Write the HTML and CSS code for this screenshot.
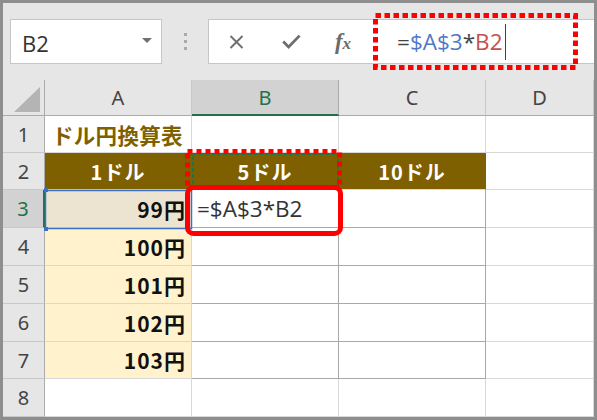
FILE: index.html
```html
<!DOCTYPE html>
<html lang="ja">
<head>
<meta charset="utf-8">
<title>ドル円換算表</title>
<link rel="stylesheet" href="styles.css">
</head>
<body>
<div class="frame">
  <div class="toolbar">
    <div class="namebox"><span class="nb-text">B2</span><span class="nb-caret"></span></div>
    <div class="sep"><i></i><i></i><i></i></div>
    <div class="fbar">
      <span class="ico ico-x"><svg width="15" height="14" viewBox="0 0 15 14"><path d="M1.5 1 L13.5 13 M13.5 1 L1.5 13" stroke="#6e6e6e" stroke-width="1.9" fill="none"/></svg></span>
      <span class="ico ico-check"><svg width="19" height="15" viewBox="0 0 19 15"><path d="M1.2 7.6 L6.6 13 L17.6 1.6" stroke="#6e6e6e" stroke-width="2.8" fill="none"/></svg></span>
      <span class="ico ico-fx">f<i>x</i></span>
      <span class="formula"><span class="op">=</span><span class="ref-a">$A$3</span><span class="op">*</span><span class="ref-b">B2</span><span class="cursor"></span></span>
    </div>
  </div>
  <div class="sheet">
    <div class="corner"><span class="tri"></span></div>
    <div class="ch">A</div>
    <div class="ch ch-sel">B</div>
    <div class="ch">C</div>
    <div class="ch">D</div>

    <div class="rh">1</div>
    <div class="c title">ドル円換算表</div>
    <div class="c"></div>
    <div class="c"></div>
    <div class="c"></div>

    <div class="rh">2</div>
    <div class="c hd">1ドル</div>
    <div class="c hd">5ドル</div>
    <div class="c hd">10ドル</div>
    <div class="c"></div>

    <div class="rh rh-sel">3</div>
    <div class="c val val-ref">99円</div>
    <div class="c edit box">=$A$3*B2</div>
    <div class="c box"></div>
    <div class="c"></div>

    <div class="rh">4</div>
    <div class="c val">100円</div>
    <div class="c box"></div>
    <div class="c box"></div>
    <div class="c"></div>

    <div class="rh">5</div>
    <div class="c val">101円</div>
    <div class="c box"></div>
    <div class="c box"></div>
    <div class="c"></div>

    <div class="rh">6</div>
    <div class="c val">102円</div>
    <div class="c box"></div>
    <div class="c box"></div>
    <div class="c"></div>

    <div class="rh">7</div>
    <div class="c val">103円</div>
    <div class="c box"></div>
    <div class="c box"></div>
    <div class="c"></div>

    <div class="rh">8</div>
    <div class="c"></div>
    <div class="c"></div>
    <div class="c"></div>
    <div class="c"></div>
  </div>
  <svg class="annot" width="597" height="420" viewBox="0 0 597 420">
    <rect x="45.5" y="190.5" width="146" height="38" fill="none" stroke="#3c6fc8" stroke-width="1.5"/>
    <rect x="44" y="188" width="4" height="4" fill="#3c6fc8"/>
    <rect x="44" y="227" width="4" height="4" fill="#3c6fc8"/>
    <rect x="193" y="154" width="145" height="35" fill="none" stroke="#217346" stroke-width="2" stroke-dasharray="4 2"/>
    <rect x="187.5" y="151.5" width="152" height="36" fill="none" stroke="#ff0000" stroke-width="5" stroke-dasharray="5 4"/>
    <rect x="187.5" y="187.5" width="153" height="46" rx="6" fill="none" stroke="#ff0000" stroke-width="5"/>
    <rect x="375.5" y="15.5" width="200" height="52" fill="none" stroke="#ff0000" stroke-width="5" stroke-dasharray="5.5 3.5"/>
  </svg>
</div>
</body>
</html>
```
FILE: styles.css
```css
html, body {
  margin: 0;
  padding: 0;
  background: #ffffff;
}

.frame {
  position: relative;
  width: 597px;
  height: 420px;
  box-sizing: border-box;
  border: 3px solid #8e8e8e;
  background: #e6e6e6;
  overflow: hidden;
  font-family: "Noto Sans", "Open Sans", "Liberation Sans", sans-serif;
}

/* ---------- toolbar ---------- */
.toolbar {
  height: 77px;
  box-sizing: border-box;
  padding-top: 16px;
  padding-left: 7px;
  display: flex;
  align-items: flex-start;
}

.namebox {
  width: 152px;
  height: 45px;
  box-sizing: border-box;
  border: 1px solid #c6c6c6;
  background: #ffffff;
  display: flex;
  align-items: center;
  justify-content: space-between;
  padding: 0 9px 0 11px;
}

.nb-text {
  font-family: "Open Sans", "Noto Sans", sans-serif;
  font-size: 22px;
  color: #333333;
  line-height: 1;
  padding-top: 2px;
}

.nb-caret {
  width: 0;
  height: 0;
  border-left: 5px solid transparent;
  border-right: 5px solid transparent;
  border-top: 5px solid #707070;
  margin-bottom: 2px;
}

.sep {
  width: 46px;
  height: 45px;
  display: flex;
  flex-direction: column;
  align-items: center;
  justify-content: center;
  gap: 4px;
}

.sep i {
  display: block;
  width: 3px;
  height: 3px;
  background: #a9a9a9;
}

.fbar {
  flex: 1;
  height: 45px;
  box-sizing: border-box;
  border: 1px solid #c6c6c6;
  border-right: none;
  background: #ffffff;
  display: flex;
  align-items: center;
}

.ico {
  display: flex;
  align-items: center;
  justify-content: center;
  height: 43px;
}

.ico-x { width: 55px; }
.ico-check { width: 54px; }

.ico-fx {
  width: 50px;
  font-family: "Liberation Serif", "DejaVu Serif", serif;
  font-style: italic;
  font-weight: bold;
  font-size: 23px;
  color: #6b6b6b;
  padding-bottom: 2px;
  box-sizing: border-box;
  align-items: baseline;
  padding-top: 9px;
}

.ico-fx i {
  font-size: 17px;
  margin-left: 0;
}

.formula {
  margin-left: 29px;
  font-family: "Open Sans", "Noto Sans", sans-serif;
  font-size: 22.5px;
  color: #444444;
  display: flex;
  align-items: center;
  height: 43px;
}

.formula .ref-a { color: #4f79c6; }
.formula .ref-b { color: #c5504e; }

.cursor {
  display: inline-block;
  width: 1px;
  height: 36px;
  background: #444444;
  margin-left: 2px;
}

/* ---------- sheet ---------- */
.sheet {
  display: grid;
  grid-template-columns: 42px 147px 147px 147px 1fr;
  grid-template-rows: 36px 37px 37px 38px 38px 38px 38px 37px 38px;
  background: #ffffff;
}

.corner,
.ch,
.rh,
.c {
  box-sizing: border-box;
  display: flex;
  align-items: center;
}

.corner {
  background: #e6e6e6;
  border-right: 1px solid #ababab;
  border-bottom: 1px solid #ababab;
  position: relative;
}

.tri {
  position: absolute;
  left: 11px;
  top: 7px;
  width: 0;
  height: 0;
  border-left: 26px solid transparent;
  border-bottom: 25px solid #b4b4b4;
}

.ch {
  background: #e6e6e6;
  justify-content: center;
  font-size: 20px;
  color: #444444;
  border-right: 1px solid #c8c8c8;
  border-bottom: 1px solid #ababab;
}

.ch-sel {
  background: #d2d2d2;
  color: #217346;
  border-bottom: 2px solid #217346;
  border-right: 1px solid #ababab;
}

.rh {
  background: #e6e6e6;
  justify-content: center;
  font-size: 20px;
  color: #444444;
  border-right: 1px solid #ababab;
  border-bottom: 1px solid #c8c8c8;
}

.rh-sel {
  background: #d2d2d2;
  color: #217346;
  border-right: 2px solid #217346;
}

.c {
  border-right: 1px solid #d8d8d8;
  border-bottom: 1px solid #d8d8d8;
  font-family: "Noto Sans CJK JP", "Noto Sans", sans-serif;
  white-space: nowrap;
}

.title {
  padding-left: 7px;
  font-size: 21.5px;
  font-weight: 700;
  color: #7f6000;
  letter-spacing: 0.3px;
}

.hd {
  background: #7f6000;
  justify-content: center;
  font-size: 20px;
  font-weight: 700;
  color: #ffffff;
  letter-spacing: 1px;
  border-right-color: #7f6000;
}

.val {
  background: #fff2cc;
  justify-content: flex-end;
  padding-right: 5px;
  font-size: 21px;
  font-weight: 700;
  color: #111111;
  letter-spacing: 1px;
}

.val-ref {
  background: #ece4d0;
}

.box {
  border-right-color: #a9a9a9;
  border-bottom-color: #a9a9a9;
}

.edit {
  padding-left: 5px;
  font-family: "Open Sans", "Noto Sans", sans-serif;
  font-size: 22.5px;
  color: #333333;
  overflow: visible;
}

/* ---------- annotations ---------- */
.annot {
  position: absolute;
  left: -3px;
  top: -3px;
  pointer-events: none;
}
```
